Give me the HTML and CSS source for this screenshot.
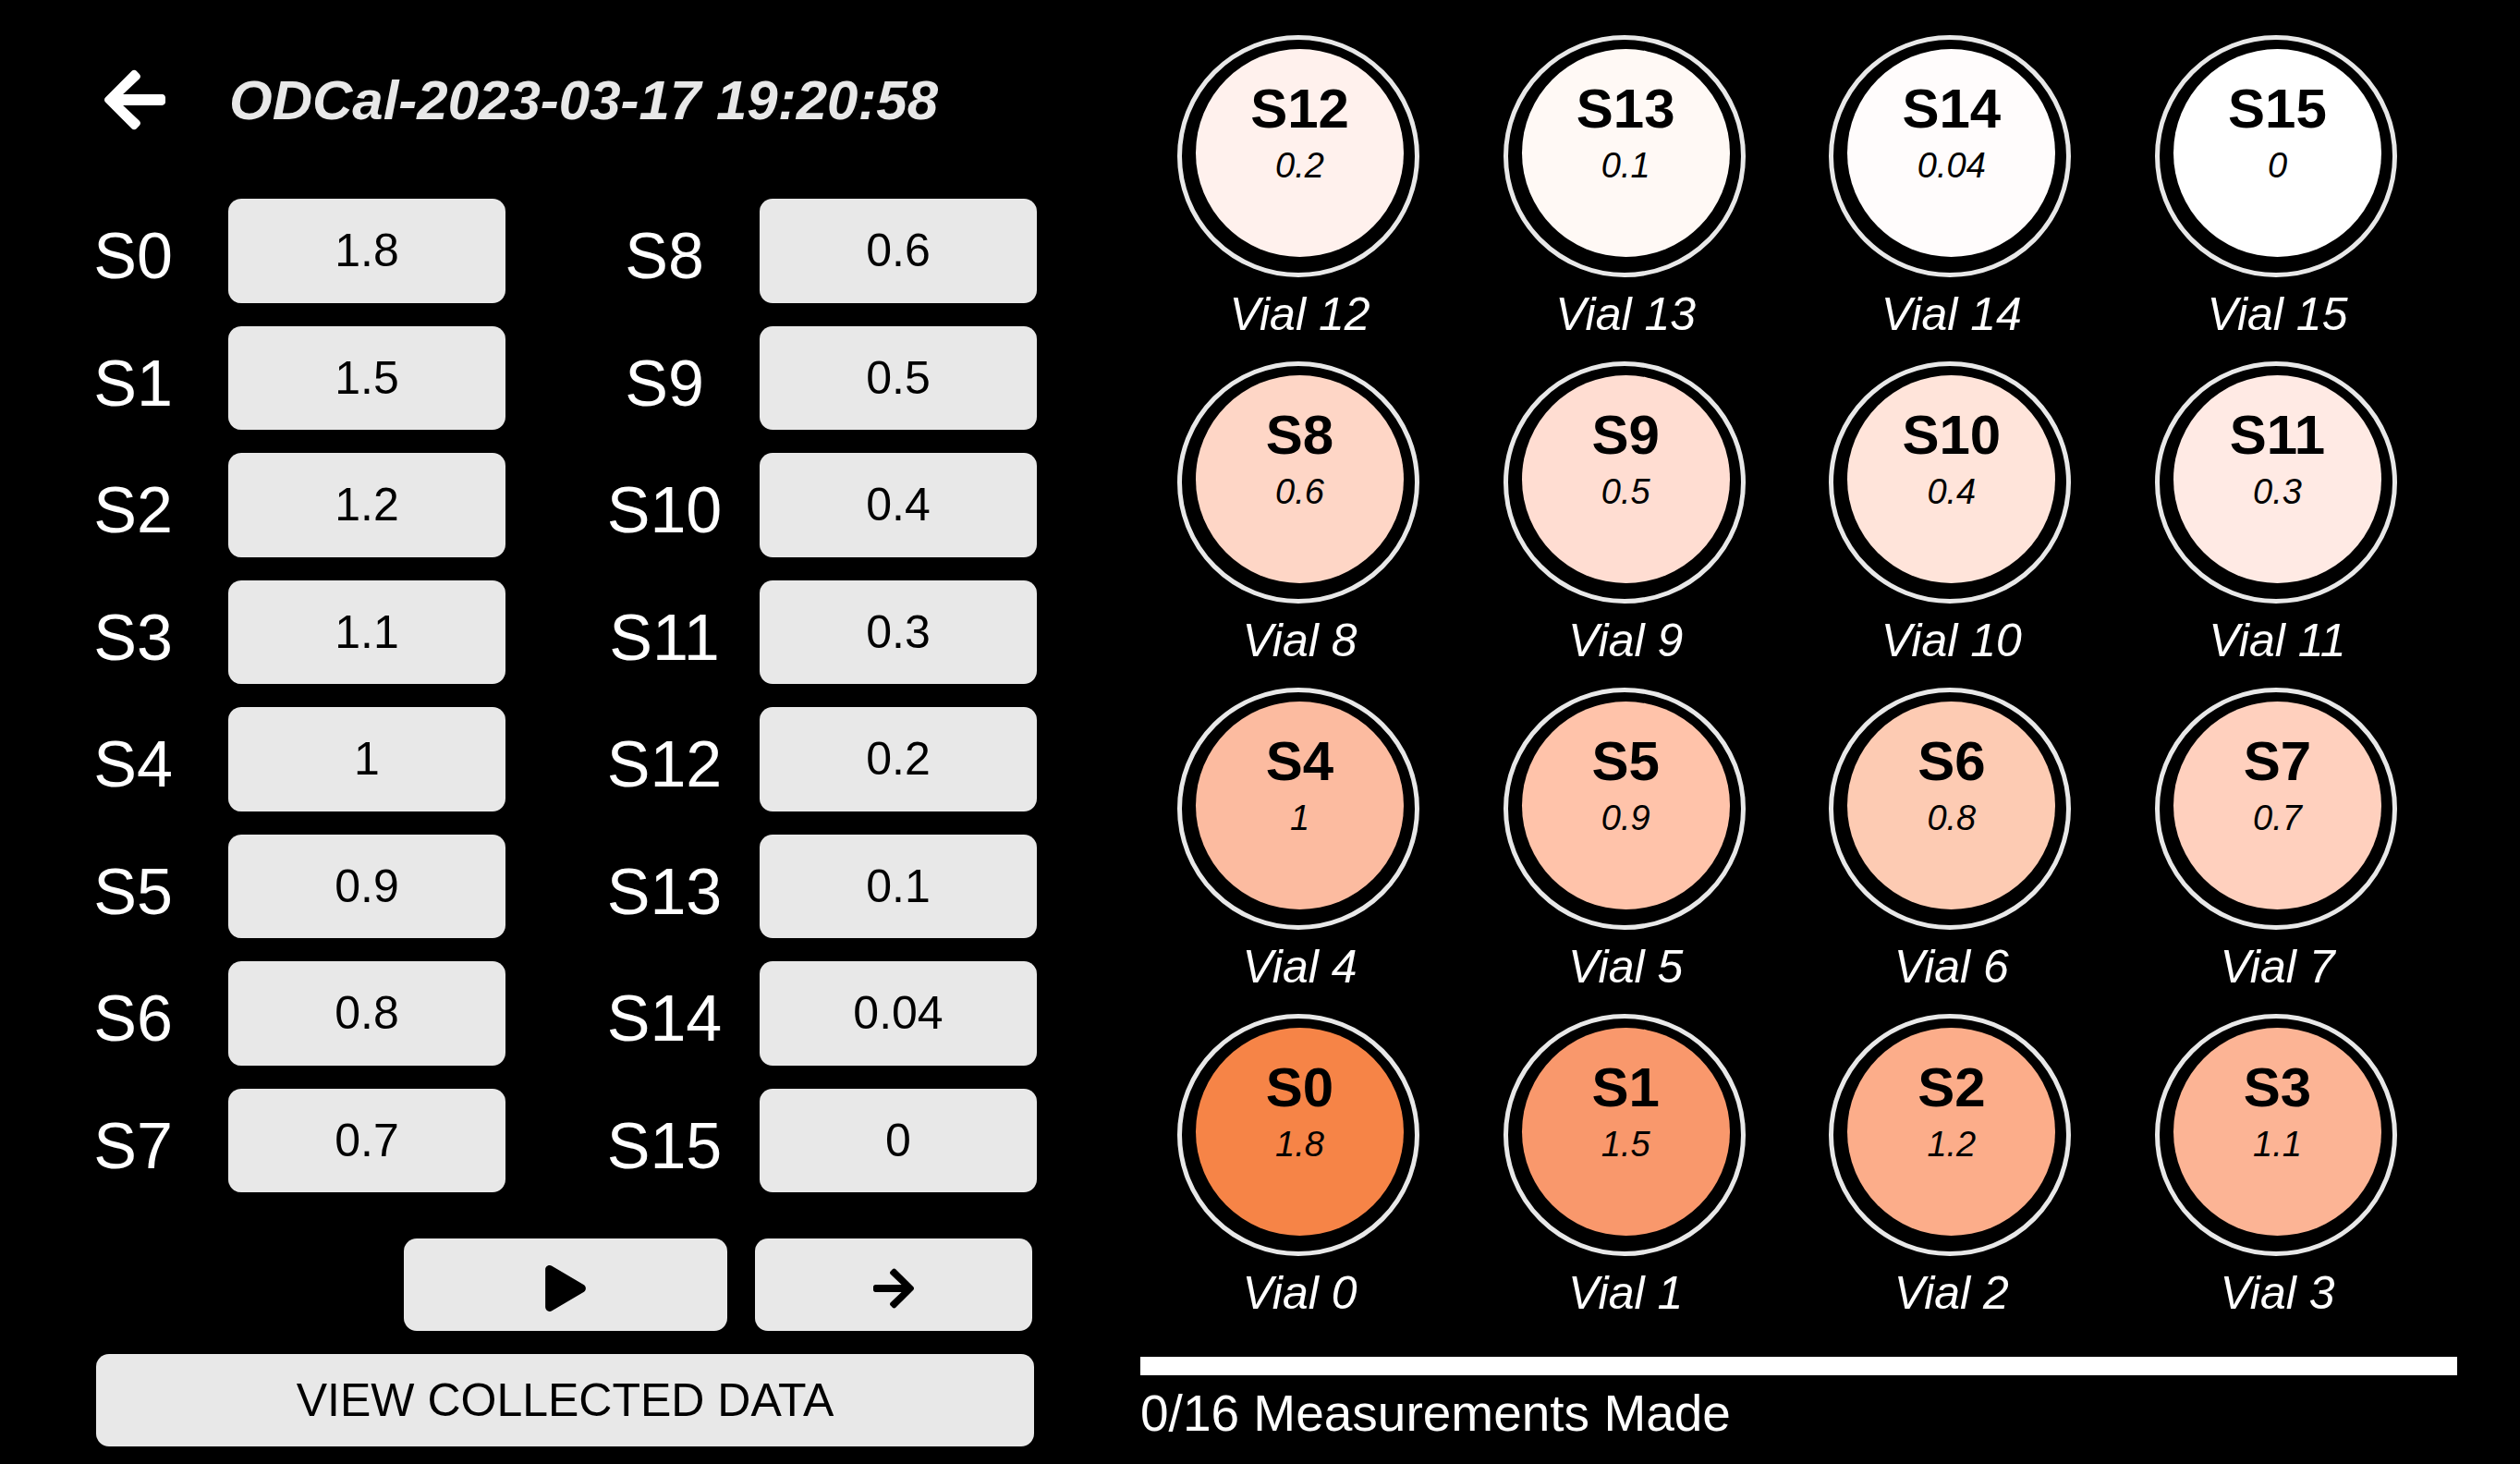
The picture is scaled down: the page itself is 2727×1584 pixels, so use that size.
FILE: index.html
```html
<!DOCTYPE html>
<html lang="en">
<head>
<meta charset="utf-8">
<meta name="viewport" content="width=device-width, initial-scale=1">
<title>OD Calibration</title>
<link rel="stylesheet" href="styles.css">
</head>
<body>
<main class="page">
  <section class="panel">
    <header class="header">
      <button type="button" class="back" aria-label="Back">
        <svg class="back-icon" viewBox="0 32 448 448" aria-hidden="true"><path d="M257.5 445.1l-22.2 22.2c-9.4 9.4-24.6 9.4-33.9 0L7 273c-9.4-9.4-9.4-24.6 0-33.9L201.4 44.7c9.4-9.4 24.6-9.4 33.9 0l22.2 22.2c9.5 9.5 9.3 25-.4 34.3L136.6 216H424c13.3 0 24 10.7 24 24v32c0 13.3-10.7 24-24 24H136.6l120.5 114.8c9.8 9.3 10 24.8.4 34.3z"/></svg>
      </button>
      <h1 class="title">ODCal-2023-03-17 19:20:58</h1>
    </header>

    <form class="standards">
      <div class="field"><label for="s0">S0</label><input id="s0" type="text" inputmode="decimal" value="1.8"></div>
      <div class="field"><label for="s1">S1</label><input id="s1" type="text" inputmode="decimal" value="1.5"></div>
      <div class="field"><label for="s2">S2</label><input id="s2" type="text" inputmode="decimal" value="1.2"></div>
      <div class="field"><label for="s3">S3</label><input id="s3" type="text" inputmode="decimal" value="1.1"></div>
      <div class="field"><label for="s4">S4</label><input id="s4" type="text" inputmode="decimal" value="1"></div>
      <div class="field"><label for="s5">S5</label><input id="s5" type="text" inputmode="decimal" value="0.9"></div>
      <div class="field"><label for="s6">S6</label><input id="s6" type="text" inputmode="decimal" value="0.8"></div>
      <div class="field"><label for="s7">S7</label><input id="s7" type="text" inputmode="decimal" value="0.7"></div>
      <div class="field"><label for="s8">S8</label><input id="s8" type="text" inputmode="decimal" value="0.6"></div>
      <div class="field"><label for="s9">S9</label><input id="s9" type="text" inputmode="decimal" value="0.5"></div>
      <div class="field"><label for="s10">S10</label><input id="s10" type="text" inputmode="decimal" value="0.4"></div>
      <div class="field"><label for="s11">S11</label><input id="s11" type="text" inputmode="decimal" value="0.3"></div>
      <div class="field"><label for="s12">S12</label><input id="s12" type="text" inputmode="decimal" value="0.2"></div>
      <div class="field"><label for="s13">S13</label><input id="s13" type="text" inputmode="decimal" value="0.1"></div>
      <div class="field"><label for="s14">S14</label><input id="s14" type="text" inputmode="decimal" value="0.04"></div>
      <div class="field"><label for="s15">S15</label><input id="s15" type="text" inputmode="decimal" value="0"></div>
    </form>

    <div class="actions">
      <div class="run">
        <button type="button" class="button play" aria-label="Start measurement">
          <svg class="play-icon" viewBox="0 0 448 512" aria-hidden="true"><path d="M424.4 214.7L72.4 6.6C43.8-10.3 0 6.1 0 47.9V464c0 37.5 40.7 60.1 72.4 41.3l352-208c31.4-18.5 31.5-64.1 0-82.6z"/></svg>
        </button>
        <button type="button" class="button next" aria-label="Next">
          <svg class="next-icon" viewBox="0 32 448 448" aria-hidden="true"><path d="M190.5 66.9l22.2-22.2c9.4-9.4 24.6-9.4 33.9 0L441 239c9.4 9.4 9.4 24.6 0 33.9L246.6 467.3c-9.4 9.4-24.6 9.4-33.9 0l-22.2-22.2c-9.5-9.5-9.3-25 .4-34.3L311.4 296H24c-13.3 0-24-10.7-24-24v-32c0-13.3 10.7-24 24-24h287.4L190.9 101.2c-9.8-9.3-10-24.8-.4-34.3z"/></svg>
        </button>
      </div>
      <button type="button" class="button">VIEW COLLECTED DATA</button>
    </div>
  </section>

  <section class="rack">
    <div class="vials">
      <figure class="vial"><div class="ring"><div class="well" style="--fill:#fff1ed"><strong>S12</strong><em>0.2</em></div></div><figcaption>Vial 12</figcaption></figure>
      <figure class="vial"><div class="ring"><div class="well" style="--fill:#fff9f5"><strong>S13</strong><em>0.1</em></div></div><figcaption>Vial 13</figcaption></figure>
      <figure class="vial"><div class="ring"><div class="well" style="--fill:#fffcfc"><strong>S14</strong><em>0.04</em></div></div><figcaption>Vial 14</figcaption></figure>
      <figure class="vial"><div class="ring"><div class="well" style="--fill:#ffffff"><strong>S15</strong><em>0</em></div></div><figcaption>Vial 15</figcaption></figure>

      <figure class="vial"><div class="ring"><div class="well" style="--fill:#fed6c6"><strong>S8</strong><em>0.6</em></div></div><figcaption>Vial 8</figcaption></figure>
      <figure class="vial"><div class="ring"><div class="well" style="--fill:#ffddd2"><strong>S9</strong><em>0.5</em></div></div><figcaption>Vial 9</figcaption></figure>
      <figure class="vial"><div class="ring"><div class="well" style="--fill:#ffe4da"><strong>S10</strong><em>0.4</em></div></div><figcaption>Vial 10</figcaption></figure>
      <figure class="vial"><div class="ring"><div class="well" style="--fill:#ffeae4"><strong>S11</strong><em>0.3</em></div></div><figcaption>Vial 11</figcaption></figure>

      <figure class="vial"><div class="ring"><div class="well" style="--fill:#fcbba0"><strong>S4</strong><em>1</em></div></div><figcaption>Vial 4</figcaption></figure>
      <figure class="vial"><div class="ring"><div class="well" style="--fill:#ffc3aa"><strong>S5</strong><em>0.9</em></div></div><figcaption>Vial 5</figcaption></figure>
      <figure class="vial"><div class="ring"><div class="well" style="--fill:#fdcbb3"><strong>S6</strong><em>0.8</em></div></div><figcaption>Vial 6</figcaption></figure>
      <figure class="vial"><div class="ring"><div class="well" style="--fill:#ffd0be"><strong>S7</strong><em>0.7</em></div></div><figcaption>Vial 7</figcaption></figure>

      <figure class="vial"><div class="ring"><div class="well" style="--fill:#f68447"><strong>S0</strong><em>1.8</em></div></div><figcaption>Vial 0</figcaption></figure>
      <figure class="vial"><div class="ring"><div class="well" style="--fill:#f9986c"><strong>S1</strong><em>1.5</em></div></div><figcaption>Vial 1</figcaption></figure>
      <figure class="vial"><div class="ring"><div class="well" style="--fill:#fcad8a"><strong>S2</strong><em>1.2</em></div></div><figcaption>Vial 2</figcaption></figure>
      <figure class="vial"><div class="ring"><div class="well" style="--fill:#fcb495"><strong>S3</strong><em>1.1</em></div></div><figcaption>Vial 3</figcaption></figure>
    </div>
    <progress class="bar" id="measured" value="0" max="16"></progress>
    <label class="status" for="measured">0/16 Measurements Made</label>
  </section>
</main>
</body>
</html>
```
FILE: styles.css
```css
* {
  box-sizing: border-box;
}

body {
  margin: 0;
  background: #000;
  color: #fff;
  font-family: "Liberation Sans", Arial, sans-serif;
  font-size: 50px;
}

button,
input {
  margin: 0;
  border: 0;
  font: inherit;
  color: #000;
}

.page {
  display: grid;
  grid-template-columns: minmax(0, 22fr) minmax(0, 29fr);
  column-gap: 112px;
  min-height: 100vh;
  padding: 0 68px 0 41px;
}

/* Left panel: calibration standards and controls */

.panel {
  display: flex;
  flex-direction: column;
  padding-bottom: 19px;
}

.header {
  display: grid;
  grid-template-columns: 206px 1fr;
  align-items: center;
  height: 215px;
}

.back {
  display: flex;
  padding: 0 0 0 72px;
  background: none;
}

.back-icon {
  width: 66px;
  height: 66px;
  fill: #fff;
}

.title {
  margin: 0;
  padding: 3px 0 0 1px;
  color: #e8e8e8;
  font-size: 60px;
  font-style: italic;
  line-height: 60px;
}

.standards {
  display: grid;
  flex: 1;
  grid-auto-flow: column;
  grid-template-rows: repeat(8, 1fr);
  grid-template-columns: 1fr 1fr;
  gap: 25px 69px;
}

.field {
  display: flex;
  align-items: center;
}

.field label {
  flex: 1;
  padding-top: 12px;
  font-size: 70px;
  line-height: 72px;
  text-align: center;
}

.field input {
  width: 300px;
  height: 100%;
  padding: 0;
  border-radius: 14px;
  background: #e8e8e8;
  text-align: center;
}

.actions {
  display: flex;
  flex-direction: column;
  gap: 25px;
  margin-top: 50px;
  padding: 0 3px 0 63px;
}

.run {
  display: flex;
  justify-content: flex-end;
  gap: 30px;
  padding-right: 2px;
}

.button {
  display: flex;
  align-items: center;
  justify-content: center;
  height: 100px;
  padding: 0;
  border-radius: 14px;
  background: #e8e8e8;
}

.play {
  width: 350px;
}

.next {
  width: 300px;
}

.play-icon {
  width: 44px;
  height: 50px;
  margin-top: 8px;
}

.next-icon {
  width: 44px;
  height: 44px;
  margin-top: 8px;
}

/* Right panel: vial rack and progress */

.rack {
  display: flex;
  flex-direction: column;
  padding-top: 38px;
}

.vials {
  display: grid;
  grid-template-columns: repeat(4, 262px);
  justify-content: space-between;
  row-gap: 21px;
  padding: 0 65px 0 40px;
}

.vial {
  margin: 0;
}

.ring {
  height: 262px;
  padding: 10px 0 0 15px;
  border: 5px solid #e8e8e8;
  border-radius: 50%;
}

.well {
  display: flex;
  flex-direction: column;
  align-items: center;
  gap: 11px;
  width: 225px;
  height: 225px;
  padding-top: 35px;
  border-radius: 50%;
  background: var(--fill);
  color: #000;
}

.well strong {
  font-size: 60px;
  line-height: 60px;
}

.well em {
  font-size: 38px;
  line-height: 40px;
}

.vial figcaption {
  margin-top: 10px;
  padding-left: 3px;
  font-style: italic;
  line-height: 60px;
  text-align: center;
}

.bar {
  display: block;
  width: 100%;
  height: 20px;
  margin-top: 39px;
  border: 0;
  background: #fff;
  appearance: none;
}

.bar::-webkit-progress-bar {
  background: #fff;
}

.bar::-webkit-progress-value {
  background: #f68447;
}

.status {
  margin-top: 11px;
  font-size: 55px;
  line-height: 60px;
}
```
